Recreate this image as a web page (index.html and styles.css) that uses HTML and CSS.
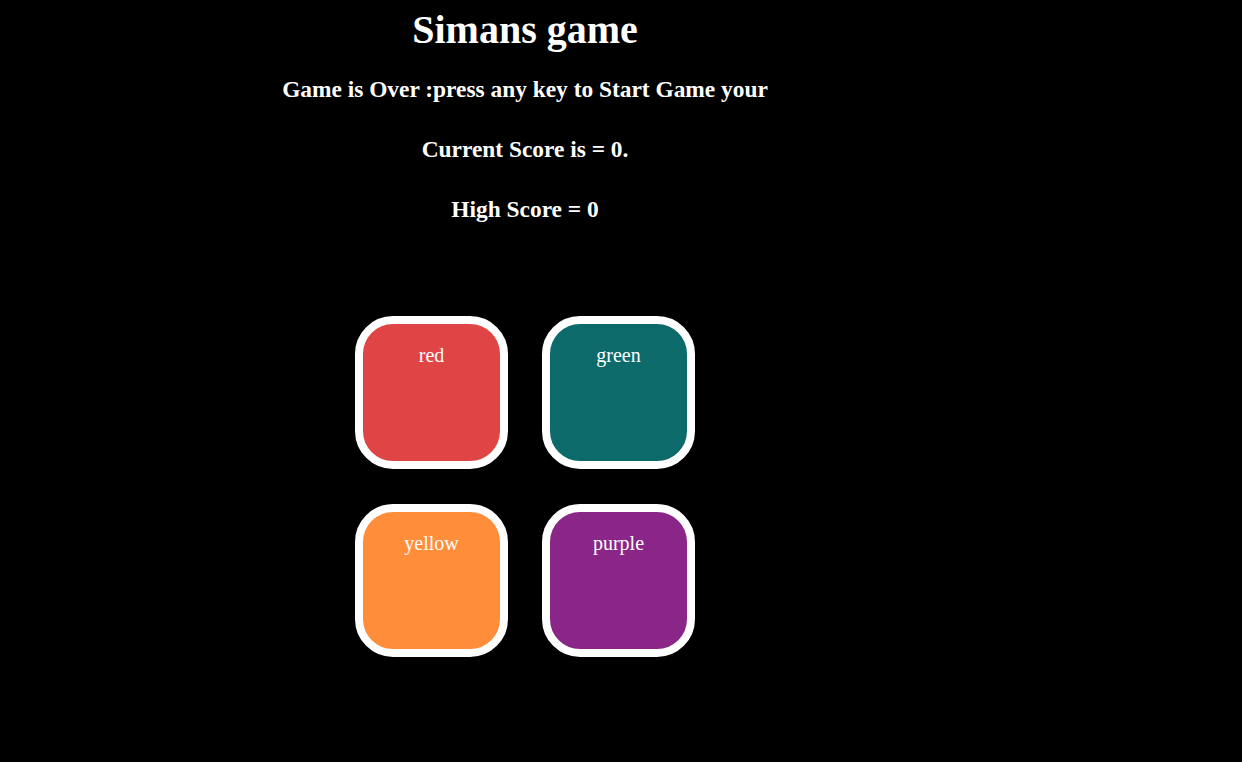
FILE: index.html
```html
<!DOCTYPE html>
<html>
<head>
<meta charset="utf-8">
<title>Simans game</title>
<link rel="stylesheet" href="styles.css">
</head>
<body>
<main class="page">
  <h1 class="title">Simans game</h1>
  <div class="status">
    <div class="status-line">Game is Over :press any key to Start Game your</div>
    <div class="status-line">Current Score is = 0.</div>
    <div class="status-line">High Score = 0</div>
  </div>
  <div class="board">
    <div class="pad pad-red">red</div>
    <div class="pad pad-green">green</div>
    <div class="pad pad-yellow">yellow</div>
    <div class="pad pad-purple">purple</div>
  </div>
</main>
</body>
</html>
```

FILE: styles.css
```css
html, body {
  background: #000;
}
body {
  margin: 0;
  color: #fff;
  font-family: "Liberation Serif", "Times New Roman", serif;
}
.page {
  width: 1050px;
  text-align: center;
}
.title {
  margin: 0;
  font-size: 40px;
  font-weight: bold;
  line-height: 60px;
}
.status {
  margin-top: -1px;
  font-size: 23.4px;
  font-weight: bold;
  line-height: 60px;
}
.board {
  margin: 77px auto 0;
  display: grid;
  grid-template-columns: 153px 153px;
  column-gap: 34px;
  row-gap: 35px;
  justify-content: center;
}
.pad {
  box-sizing: border-box;
  width: 153px;
  height: 153px;
  border: 8px solid #fff;
  border-radius: 38px;
  padding-top: 20px;
  font-size: 20px;
  line-height: 23px;
  font-weight: normal;
}
.pad-red { background: #e04545; }
.pad-green { background: #0d6a6a; }
.pad-yellow { background: #ff8d3a; }
.pad-purple { background: #892687; }
```
